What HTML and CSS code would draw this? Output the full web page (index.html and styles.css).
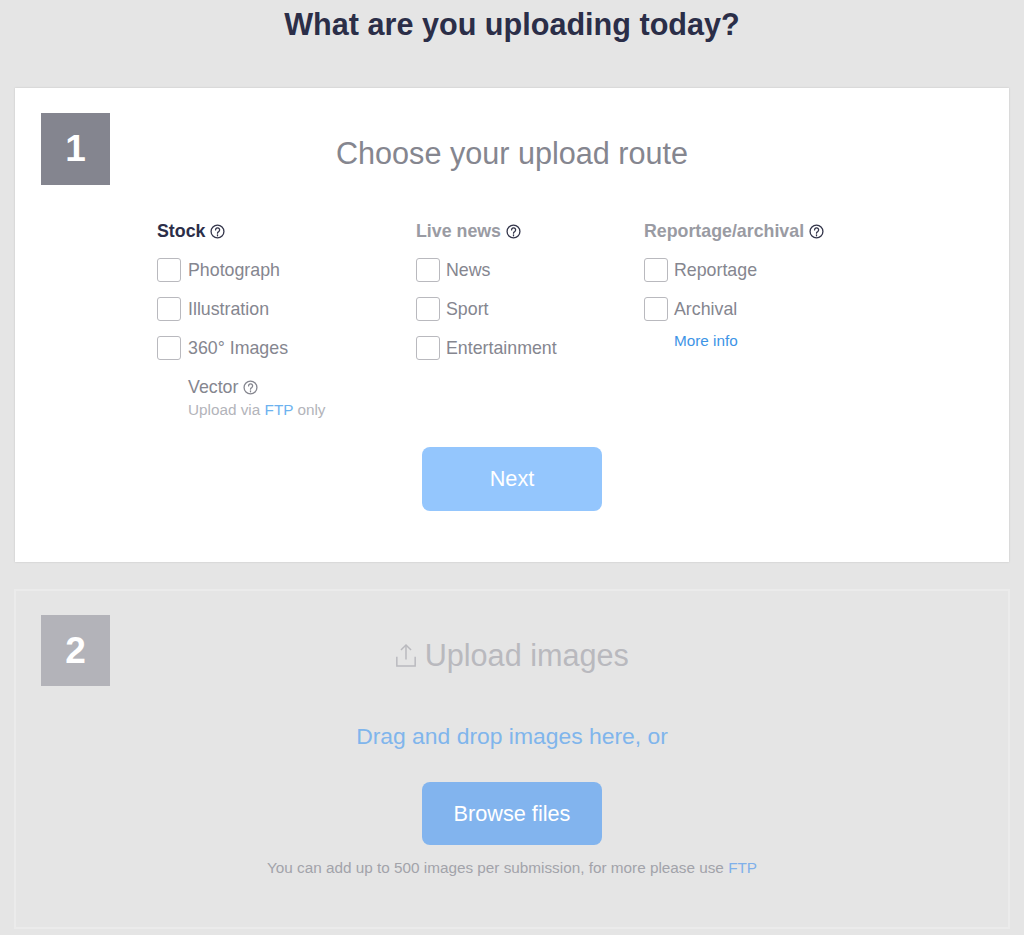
FILE: index.html
```html
<!DOCTYPE html>
<html lang="en">
<head>
  <meta charset="UTF-8" />
  <meta name="viewport" content="width=device-width, initial-scale=1.0"/>
  <title>What are you uploading today?</title>
  <link rel="stylesheet" href="styles.css">
</head>
<body>
  <h1 class="page-title">What are you uploading today?</h1>

  <section class="card">
    <header class="card-head">
      <div class="step">1</div>
      <h2 class="card-title">Choose your upload route</h2>
    </header>

    <div class="routes">
      <div class="route">
        <h3 class="route-title active">Stock
          <svg class="help" viewBox="0 0 14 14"><circle cx="7" cy="7" r="6"/><path d="M5.2 5.5a1.9 1.9 0 1 1 2.9 1.6c-.7.4-1.1.8-1.1 1.5"/><path d="M7 10.1v.9"/></svg>
        </h3>
        <label class="check"><span class="box"></span>Photograph</label>
        <label class="check"><span class="box"></span>Illustration</label>
        <label class="check"><span class="box"></span>360° Images</label>
        <div class="vector">
          <div class="vector-name">Vector
            <svg class="help" viewBox="0 0 14 14"><circle cx="7" cy="7" r="6"/><path d="M5.2 5.5a1.9 1.9 0 1 1 2.9 1.6c-.7.4-1.1.8-1.1 1.5"/><path d="M7 10.1v.9"/></svg>
          </div>
          <div class="vector-note">Upload via <a href="#">FTP</a> only</div>
        </div>
      </div>

      <div class="route">
        <h3 class="route-title">Live news
          <svg class="help" viewBox="0 0 14 14"><circle cx="7" cy="7" r="6"/><path d="M5.2 5.5a1.9 1.9 0 1 1 2.9 1.6c-.7.4-1.1.8-1.1 1.5"/><path d="M7 10.1v.9"/></svg>
        </h3>
        <label class="check"><span class="box"></span>News</label>
        <label class="check"><span class="box"></span>Sport</label>
        <label class="check"><span class="box"></span>Entertainment</label>
      </div>

      <div class="route">
        <h3 class="route-title">Reportage/archival
          <svg class="help" viewBox="0 0 14 14"><circle cx="7" cy="7" r="6"/><path d="M5.2 5.5a1.9 1.9 0 1 1 2.9 1.6c-.7.4-1.1.8-1.1 1.5"/><path d="M7 10.1v.9"/></svg>
        </h3>
        <label class="check"><span class="box"></span>Reportage</label>
        <label class="check"><span class="box"></span>Archival</label>
        <a class="more-info" href="#">More info</a>
      </div>
    </div>

    <div class="actions">
      <button type="button" class="btn btn-next">Next</button>
    </div>
  </section>

  <section class="card card-disabled">
    <header class="card-head">
      <div class="step">2</div>
      <h2 class="card-title">
        <svg class="upload-icon" viewBox="0 0 24 28"><path d="M12 19V3"/><path d="M6.5 8.5 12 3l5.5 5.5"/><path d="M2 16v10h20V16"/></svg>
        Upload images
      </h2>
    </header>

    <div class="drop">
      <p class="drop-text">Drag and drop images here, or</p>
      <button type="button" class="btn btn-browse">Browse files</button>
      <p class="drop-note">You can add up to 500 images per submission, for more please use <a href="#">FTP</a></p>
    </div>
  </section>
</body>
</html>
```

FILE: styles.css
```css
* { box-sizing: border-box; }

body {
  margin: 0;
  font-family: "Liberation Sans", Arial, sans-serif;
  background-color: #e5e5e5;
  color: #85868f;
}

a { color: #3d94e6; text-decoration: none; }

.page-title {
  margin: 0 0 39px;
  height: 49px;
  line-height: 49px;
  text-align: center;
  font-size: 30.6px;
  font-weight: bold;
  color: #2b2e48;
}

.card {
  margin: 0 15px 27px;
  padding: 25px 26px 51px;
  height: 474px;
  background-color: white;
  box-shadow: 0 0 2px rgba(0, 0, 0, 0.15);
}

.card-head {
  display: grid;
  grid-template-columns: 69px 1fr 69px;
  align-items: center;
}

.step {
  height: 72px;
  line-height: 72px;
  background-color: #84858f;
  color: white;
  font-size: 37px;
  font-weight: bold;
  text-align: center;
}

.card-title {
  margin: 9px 0 0;
  text-align: center;
  font-size: 30.6px;
  font-weight: normal;
  color: #85868f;
}

.routes {
  display: grid;
  grid-template-columns: 259px 228px 1fr;
  margin: 35px 0 0 116px;
}

.route-title {
  display: flex;
  align-items: center;
  gap: 5px;
  margin: 0 0 16px;
  height: 22px;
  font-size: 17.8px;
  font-weight: bold;
  color: #9a9ba3;
}

.route-title.active { color: #2b2e48; }

.help {
  width: 15px;
  height: 15px;
  fill: none;
  stroke: #33354a;
  stroke-width: 1.2;
  stroke-linecap: round;
}

.check {
  display: flex;
  align-items: center;
  gap: 7px;
  height: 24px;
  margin-bottom: 15px;
  font-size: 17.8px;
}

.route + .route .check { gap: 6px; }

.box {
  width: 24px;
  height: 24px;
  border: 1px solid #b9b9be;
  border-radius: 3px;
}

.vector { margin: 0 0 0 31px; }

.vector-name {
  display: flex;
  align-items: center;
  gap: 5px;
  height: 24px;
  font-size: 17.8px;
}

.vector-name .help { stroke: #85868f; }

.vector-note {
  margin-top: 2px;
  font-size: 15.3px;
  color: #b3b4ba;
}

.vector-note a { color: #6db2ef; }

.more-info {
  display: block;
  margin: -4px 0 0 30px;
  font-size: 15.3px;
}

.actions {
  display: flex;
  justify-content: center;
  margin-top: 28px;
}

.btn {
  width: 180px;
  height: 64px;
  border: none;
  border-radius: 8px;
  color: white;
  font-family: inherit;
  font-size: 21.7px;
}

.btn-next { background-color: #94c6fd; }

.card-disabled {
  margin: 0 14px;
  padding: 24px 25px 0;
  height: 340px;
  background-color: #e5e5e5;
  border: 2px solid #ebebeb;
  box-shadow: none;
}

.card-disabled .step {
  height: 71px;
  line-height: 71px;
  background-color: #b3b3b9;
}

.card-disabled .card-title { color: #b9b9be; }

.upload-icon {
  width: 22px;
  height: 26px;
  margin-right: -1px;
  fill: none;
  stroke: #b9b9be;
  stroke-width: 1.6;
  vertical-align: -2px;
}

.drop { text-align: center; }

.drop-text {
  margin: 37px 0 33px;
  font-size: 22.9px;
  line-height: 26px;
  color: #80b5ec;
}

.btn-browse {
  display: block;
  margin: 0 auto;
  height: 63px;
  background-color: #82b4ee;
}

.drop-note {
  margin: 14px 0 0;
  font-size: 15.3px;
  line-height: 18px;
  color: #a2a3aa;
}

.drop-note a { color: #80b0ea; }
```
